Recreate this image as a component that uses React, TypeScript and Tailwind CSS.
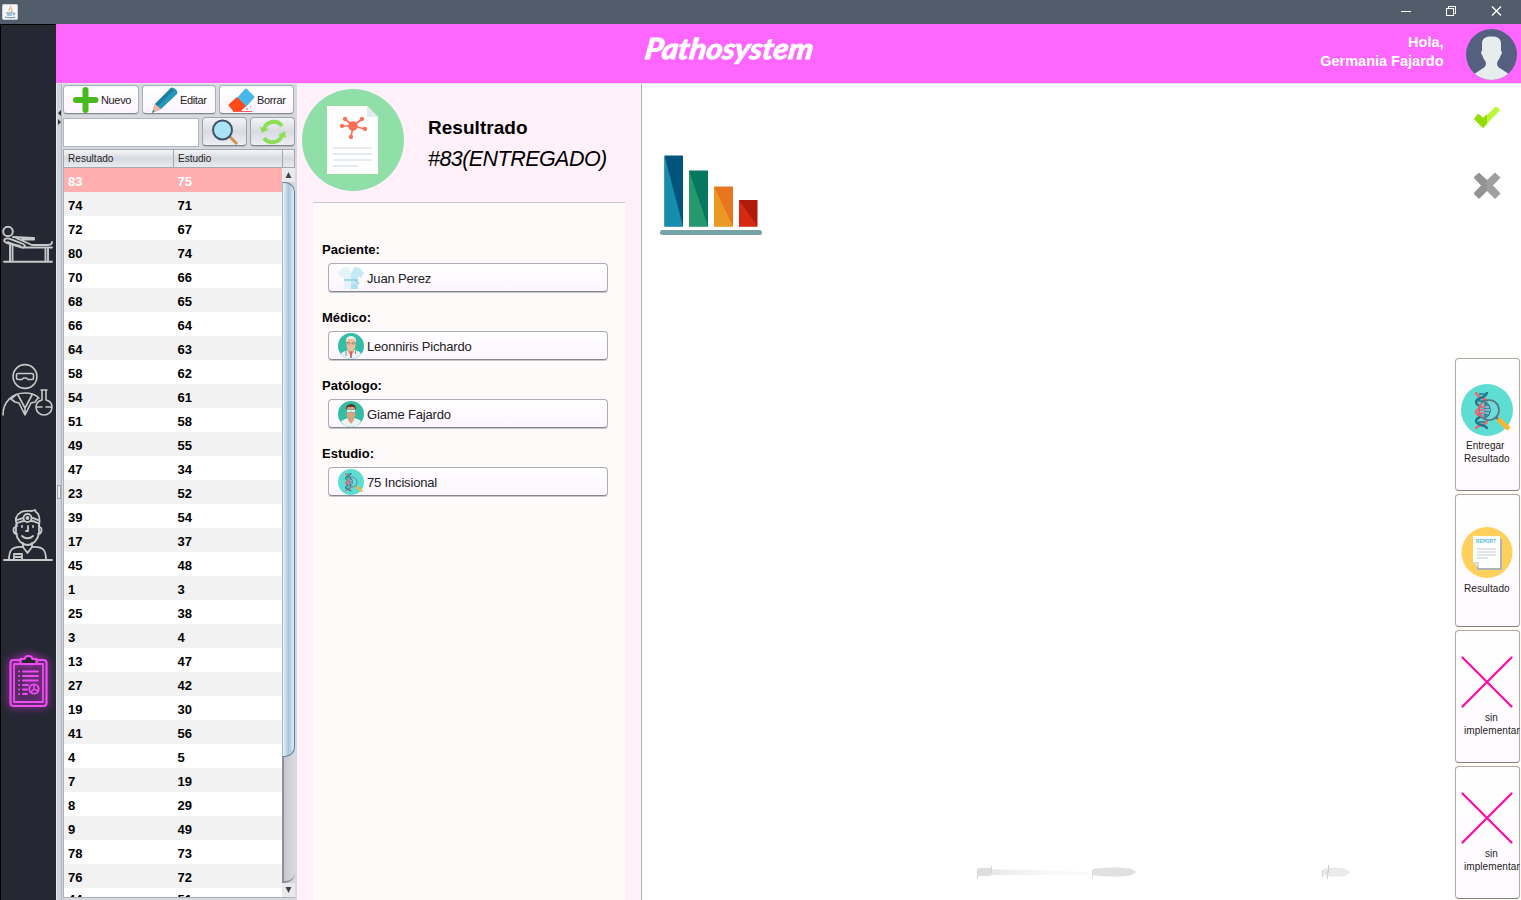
import React from "react";

const rows: [string, string][] = [
  ["83", "75"], ["74", "71"], ["72", "67"], ["80", "74"], ["70", "66"], ["68", "65"],
  ["66", "64"], ["64", "63"], ["58", "62"], ["54", "61"], ["51", "58"], ["49", "55"],
  ["47", "34"], ["23", "52"], ["39", "54"], ["17", "37"], ["45", "48"], ["1", "3"],
  ["25", "38"], ["3", "4"], ["13", "47"], ["27", "42"], ["19", "30"], ["41", "56"],
  ["4", "5"], ["7", "19"], ["8", "29"], ["9", "49"], ["78", "73"], ["76", "72"], ["44", "51"],
];

const lightButton =
  "flex items-center rounded-[4px] border border-[#a9adb5] border-b-[#85888f] bg-gradient-to-b from-white to-[#fdf5ff] shadow-[0_1px_0_#c4c6cc]";
const grayButton =
  "flex items-center justify-center rounded-[4px] border border-[#9fa3ab] border-b-[#85888f] bg-gradient-to-b from-[#f3f4f6] via-[#d9dbe2] to-[#eceef3] shadow-[0_1px_0_#b4b7be]";

function BedIcon() {
  return (
    <svg width="52" height="40" viewBox="0 0 52 40" fill="none" stroke="#c9c9c9" strokeWidth="1.9" strokeLinecap="round" strokeLinejoin="round">
      <circle cx="6" cy="6.500" r="4.800" />
      <path d="M3 14c2-1.500 5-.5 18 5 3 1.500 2 4-1 3.500L5 18c-3-1-3.500-2.500-2-4z" />
      <path d="M11 12 32 13v1.500H20M14 13l16 7h15q5 0 5-3M21 22.500h29" />
      <path d="M8 20v16M10.500 21v15M43.500 24v12M46 24v12M2 36.700h48" />
      <path d="M6 17c4 2 8 3 12 4" />
    </svg>
  );
}

function ScientistIcon() {
  return (
    <svg width="52" height="54" viewBox="0 0 52 54" fill="none" stroke="#c9c9c9" strokeWidth="1.600" strokeLinecap="round" strokeLinejoin="round">
      <circle cx="23" cy="13.500" r="11.900" />
      <path d="M16 10.500h14c1 0 1.500.5 1.500 1.500v3c0 1-.5 1.500-1.500 1.500h-4L24.500 15h-3L20 16.500h-4c-1 0-1.500-.5-1.500-1.500v-3c0-1 .5-1.500 1.500-1.500z" />
      <path d="M1 52c0-13 9-22 22-22 6 0 11 2 14 5M14 32l-5 4 4 3 4 1 6 12 6-12 4-1 3-4M16 32l7 13 7-13M23 45v7" />
      <path d="M39 27h6M40 27v10c-4 1-6 4-6 7 0 5 4 8 8 8s8-3 8-8c0-3-2-6-6-7V27M35 44h5M44 44h5" />
    </svg>
  );
}

function DoctorIcon() {
  return (
    <svg width="50" height="54" viewBox="0 0 50 54" fill="none" stroke="#c9c9c9" strokeWidth="1.800" strokeLinecap="round" strokeLinejoin="round">
      <path d="M14 18c-2-6-1-11 3-13 3-3 8-2 12-2l3-1 1 2c4 2 4 8 3 14M14 12c7-3 16-3 21 0M14 15c7-3 16-3 21 0" />
      <circle cx="24.500" cy="10" r="4" fill="#252833" />
      <circle cx="24.500" cy="10" r="1" />
      <path d="M13 17v8c1 7 6 12 11.500 12S35 32 36 25v-8M13 19c-4 0-3 7 1 7M36 19c4 0 3 7-1 7" />
      <path d="M25 18v5h-2M19 28c3 3 8 3 11 0M19 18v1M30 18v1M20 35v4l4.500 6 4.500-6v-4" />
      <path d="M6 52c0-9 2-14 14-13M43 52c0-9-2-14-14-13M1 52h48M11 52v-6h8v6M12 49h6" />
    </svg>
  );
}

function ClipboardIcon() {
  return (
    <svg width="54" height="70" viewBox="0 0 54 70" fill="none" stroke="#ee4df0" strokeLinecap="round" strokeLinejoin="round" className="drop-shadow-[0_0_4px_#d92fe0]">
      <rect x="9.500" y="14" width="36" height="46" rx="3" strokeWidth="2.200" />
      <path d="M18 18h-5v38h29V18h-6" strokeWidth="1.800" />
      <path d="M19.500 13h4c1-4 7-4 8 0h4v5h-16z" fill="#252833" strokeWidth="2.200" />
      <path d="M22 25.500h15M22 30h15M22 34.500h15M22 39h5M22 43.500h4M22 48h4M18 25.500h.1M18 30h.1M18 34.500h.1M18 39h.1M18 43.500h.1M18 48h.1" strokeWidth="1.900" />
      <circle cx="33" cy="43" r="4.700" strokeWidth="1.800" />
      <path d="M33 38.500V43l4 2M33 43l-3 3" strokeWidth="1.400" />
    </svg>
  );
}

function Dna({ size }: { size: number }) {
  return (
    <svg width={size} height={size} viewBox="0 0 52 52" className="shrink-0">
      <circle cx="26" cy="26" r="26" fill="#5eded3" />
      <g fill="none" strokeWidth="2.400">
        <path d="M15 8c0 7 11 5 11 10s-11 5-11 10 11 4 11 9-11 3-11 8" stroke="#ef6575" />
        <path d="M26 8c0 7-11 5-11 10s11 5 11 10-11 4-11 9 11 3 11 8" stroke="#25758c" />
        <path d="M18 10h6M17 17h8M18 26h6M17 30h8M17 38h7" stroke="#25758c" strokeWidth="1.500" />
      </g>
      <circle cx="28" cy="26" r="10" fill="#79d7df" fillOpacity=".65" stroke="#53747c" strokeWidth="1.600" />
      <path d="M24 18c7 2 7 14 0 16z" fill="#25758c" fillOpacity=".7" stroke="#25758c" />
      <path d="M22 19c-6 2-6 12 0 14M19 23h5M19 26h5M19 29h5" fill="none" stroke="#ef6575" strokeWidth="1.600" />
      <path d="M24 23h4M24 26h5M24 29h4" stroke="#c9eef0" />
      <path d="m35 33 3 3" stroke="#53747c" strokeWidth="2" />
      <path d="m37 35 11 10" stroke="#ffb22e" strokeWidth="4.500" />
    </svg>
  );
}

function Gown() {
  return (
    <svg width="26" height="26" viewBox="0 0 26 26" className="shrink-0">
      <path d="M9 2 4 3 0 8l3 5 3-2v13h7V8z" fill="#e4f3fa" />
      <path d="m17 2 5 1 4 5-3 5-3-2v13h-7V8z" fill="#c4e9f3" />
      <path d="M9 2h8l-4 6z" fill="#f5fbfe" />
      <path d="M6 15h14M17 15l4 4" stroke="#8bd2e4" strokeWidth="1.300" />
      <path d="M13 19h6v5h-6z" fill="#aae0ef" />
    </svg>
  );
}

function Person({ young = false }: { young?: boolean }) {
  return (
    <svg width="26" height="26" viewBox="0 0 26 26" className="shrink-0">
      <circle cx="13" cy="13" r="13" fill="#35bca5" />
      <path d="M3 21c2-3 5-3 7-4h6c3 1 6 1 7 4-5 6.500-15 6.500-20 0z" fill="#eaf5f8" />
      <path d="M10 15h6v4l-3 4-3-4z" fill="#d9a17c" />
      <path d="M8.500 8c0-6 9-6 9 0v4c0 8-9 8-9 0z" fill={young ? "#dca47f" : "#edc09d"} />
      <path d="M8 9c-1-8 11-8 10 0l-2-3h-6z" fill={young ? "#593a2e" : "#eee"} />
      {young ? (
        <path d="M8.500 8.500h9v3.200h-3l-1.500-1-1.500 1h-3z" fill="#d8f4ed" stroke="#4b7772" strokeWidth=".5" />
      ) : (
        <>
          <path d="M9.500 9.500h2.500v1.500H9.500zm4.500 0h2.500v1.500H14z" fill="none" stroke="#8a6250" strokeWidth=".5" />
          <path d="M13 18.500v6.500" stroke="#d75155" strokeWidth="1.600" />
          <path d="M8 18v5M17.500 18v3" stroke="#536b7c" strokeWidth=".8" />
        </>
      )}
    </svg>
  );
}

function Sidebar() {
  return (
    <nav className="flex w-14 shrink-0 flex-col border-l border-t border-black bg-[#252833]">
      <div className="ml-px mt-[200px] h-[40px]"><BedIcon /></div>
      <div className="ml-px mt-[98px] h-[54px]"><ScientistIcon /></div>
      <div className="ml-[2px] mt-[91px] h-[54px]"><DoctorIcon /></div>
      <div className="mt-[84px] h-[70px]"><ClipboardIcon /></div>
    </nav>
  );
}

function Header() {
  return (
    <header className="flex h-[59px] shrink-0 bg-[#ff66ff] text-white">
      <div className="w-[585px] shrink-0" />
      <svg width="176" height="50" viewBox="0 0 176 50" className="shrink-0">
        <g transform="translate(0 35) skewX(-8)">
          <text x="3" y="0" fill="white" stroke="white" strokeWidth=".9" textLength="168" lengthAdjust="spacingAndGlyphs" fontSize="29" fontStyle="italic" fontWeight="700" fontFamily="Magneto, 'Brush Script MT', Lato, sans-serif">Pathosystem</text>
        </g>
      </svg>
      <div className="flex-1 pt-[9px] text-right text-[14.500px] font-bold leading-[19px] pr-[21.500px]">
        Hola,<br />Germania Fajardo
      </div>
      <svg width="56" height="59" viewBox="0 0 56 59" className="shrink-0">
        <clipPath id="avatar"><circle cx="26.500" cy="30.500" r="25.500" /></clipPath>
        <circle cx="26.500" cy="30.500" r="25.500" fill="#556080" />
        <path clipPath="url(#avatar)" d="M17 20c0-6 4-7.500 9.500-7.500S36 14 36 20v7c1.500 0 1 3.500-.5 4.500-.5 3-2 4.500-3 6-1 3 0 5.500 3 7l9 6v7H8.500v-7l9-6c3-1.500 4-4 3-7-1-1.500-2.500-3-3-6-1.500-1-2-4.500-.5-4.500z" fill="#e7eced" />
      </svg>
    </header>
  );
}

function Results() {
  return (
    <section className="flex w-[241px] shrink-0 bg-[#d6d9df]">
      <div className="flex w-[6px] shrink-0 flex-col border-l border-r border-[#e6e8ed] border-r-[#aeb2bb] bg-[#d0d3db]">
        <svg width="5" height="15" viewBox="0 0 5 15" className="mt-[26px] shrink-0"><path d="M4 0v6L1 3zM1 9v6l3-3z" fill="#343434" /></svg>
        <div className="mt-[360px] h-[14px] w-[4px] border border-[#9da1aa] bg-[#eceef2]" />
      </div>
      <div className="flex min-w-0 flex-1 flex-col pl-[1px] pr-[2px] pt-[1px]">
        <div className="flex h-[30px] gap-[3px] text-[11px] tracking-[-0.35px] text-[#222]">
          <button className={`${lightButton} h-[29px] w-[76px] pl-[8px]`}>
            <svg width="28" height="28" viewBox="0 0 28 28" className="shrink-0"><path d="M13.500 4v20M4 14h19.500" stroke="#48b91e" strokeWidth="6" strokeLinecap="round" /></svg>
            <span className="ml-[1px] pt-[2px]">Nuevo</span>
          </button>
          <button className={`${lightButton} h-[29px] w-[74px] pl-[8px]`}>
            <svg width="28" height="28" viewBox="0 0 28 28" className="shrink-0">
              <path d="M1 27 4 18 20 2c2-2 8 3 6 6L10 23z" fill="#2696ba" /><path d="M4 18 20 2l3 2L7 20z" fill="#1b7e9f" /><path d="m1 27 3-9 6 5z" fill="#f2b5a1" /><path d="m1 27 1-3 2 1z" fill="#258baa" />
            </svg>
            <span className="ml-[1px] pt-[2px]">Editar</span>
          </button>
          <button className={`${lightButton} h-[29px] w-[75px] pl-[8px]`}>
            <svg width="28" height="28" viewBox="0 0 28 28" className="shrink-0">
              <path d="m9 12 8-9q1-1 2 0l7 7q1 1 0 2l-8 9z" fill="#4bb7e8" /><path d="m9 11 9 9-5 5H5l-4-5q-1-1 0-2z" fill="#ff4b19" /><path d="M5 25.500h19M18 23h2m2-2h1" stroke="#ff5365" />
            </svg>
            <span className="ml-[1px] pt-[2px]">Borrar</span>
          </button>
        </div>
        <div className="mt-[2px] flex h-[32px] gap-[3px]">
          <input aria-label="Buscar" className="mt-px h-[29px] w-[136px] border border-[#b2b5bc] bg-white" />
          <button aria-label="Buscar" className={`${grayButton} h-[29px] w-[45px]`}>
            <svg width="28" height="28" viewBox="0 0 28 28"><path d="m18 18 8 8" stroke="#cf9351" strokeWidth="3" /><circle cx="11.500" cy="12" r="9.500" fill="#ace4f7" stroke="#3e5365" strokeWidth="2" /></svg>
          </button>
          <button aria-label="Actualizar" className={`${grayButton} h-[29px] w-[45px]`}>
            <svg width="28" height="28" viewBox="0 0 28 28" fill="none"><path d="M4 11A10 9.500 0 0 1 22 8M22 17A10 9.500 0 0 1 4 20" stroke="#8dde58" strokeWidth="4" transform="translate(1 0)" /><path d="m1 9 2 6 7-4zM27 20l-1-7-7 4z" fill="#8dde58" /></svg>
          </button>
        </div>
        <div className="flex h-[19px] shrink-0 border border-[#a5a8b0] bg-gradient-to-b from-[#f5f5f7] via-[#d8dae1] to-[#e9ebef] text-[10px] leading-[18px] text-[#222]">
          <div className="w-[110px] border-r border-[#a5a8b0] pl-[4px] tracking-[0.05px]">Resultado</div>
          <div className="w-[109px] border-r border-[#a5a8b0] pl-[4px]">Estudio</div>
        </div>
        <div className="flex h-[730px] shrink-0 overflow-hidden border-b border-l border-[#adb0b7]">
          <div className="w-[218px] bg-white">
            {rows.map(([result, study], i) => (
              <div key={`${result}-${study}`} className={`flex h-6 text-[13px] font-bold ${i === rows.length - 1 ? "leading-[24px]" : "leading-[27px]"} ${i === 0 ? "bg-[#ffafaf] text-white" : i % 2 ? "bg-[#f2f2f2] text-black" : "bg-white text-black"}`}>
                <span className="w-[109.500px] pl-[4px]">{result}</span><span className="pl-[4px]">{study}</span>
              </div>
            ))}
          </div>
          <div className="flex flex-1 flex-col items-center bg-gradient-to-r from-[#c1c4cc] to-[#d9dbe1]">
            <div className="flex h-[14px] w-full shrink-0 items-center justify-center bg-[#e8eaee]"><svg width="7" height="6" viewBox="0 0 7 6"><path d="m3.500 0 3 6h-6z" fill="#444" /></svg></div>
            <div className="h-[575px] w-full shrink-0 rounded-r-[10px] border border-[#627c92] border-l-[#a5b8c8] bg-gradient-to-r from-[#edf4fa] via-[#adc3d8] to-[#d8f1fc]" />
            <div className="w-full flex-1 rounded-br-[10px] border-b-2 border-l-2 border-[#8d9099]" />
            <div className="flex h-[14px] w-full shrink-0 items-center justify-center bg-[#e8eaee]"><svg width="7" height="6" viewBox="0 0 7 6"><path d="M.5 0h6l-3 6z" fill="#444" /></svg></div>
          </div>
        </div>
      </div>
    </section>
  );
}

function Field({ label, value, icon }: { label: string; value: string; icon: React.ReactNode }) {
  return (
    <div className="h-[68px]">
      <div className="pl-[9px] pt-[2px] text-[13px] font-bold leading-[18px]">{label}</div>
      <button className={`${lightButton} ml-[15px] mt-[4px] h-[29px] w-[280px] pl-[9px] text-[13px] tracking-[-0.17px] text-[#222]`}>
        {icon}<span className="ml-[3px] pt-[2px]">{value}</span>
      </button>
    </div>
  );
}

function Details() {
  return (
    <section className="flex w-[345px] shrink-0 flex-col border-r border-[#aeb3b8] bg-[#fff0fa]">
      <div className="flex h-[118px]">
        <svg width="112" height="112" viewBox="0 0 112 112" className="shrink-0">
          <circle cx="56" cy="56" r="51" fill="#90dfa9" />
          <path d="M30 22h40l11 11v57H30z" fill="#fff" /><path d="M70 22v11h11z" fill="#e3e9ed" />
          <g stroke="#ff7058" strokeWidth="1.700" fill="#ff7058">
            <path d="m56 42-8-7m8 7 9-7m-9 7 12 3m-12-3-11 0m11 0-2 11" />
            <circle cx="56" cy="42" r="4" /><circle cx="48" cy="35" r="1.300" /><circle cx="65" cy="35" r="1.300" /><circle cx="68" cy="45" r="1.300" /><circle cx="45" cy="42" r="1.300" /><circle cx="54" cy="53" r="1.300" />
          </g>
          <path d="M36 64h39M36 70h39M36 76h39M36 82h25" stroke="#e6ebef" strokeWidth="2" />
        </svg>
        <div className="pl-[19px] pt-[31px]">
          <h1 className="text-[19px] font-bold leading-[26px] tracking-[0.03px]">Resultrado</h1>
          <p className="mt-[4px] text-[21.500px] italic leading-[28px] tracking-[-0.55px]">#83(ENTREGADO)</p>
        </div>
      </div>
      <div className="ml-4 w-[312px] flex-1 border-t border-[#c9c9cd] bg-[#fffafa] pt-[36px]">
        <Field label="Paciente:" value="Juan Perez" icon={<Gown />} />
        <Field label="Médico:" value="Leonniris Pichardo" icon={<Person />} />
        <Field label="Patólogo:" value="Giame Fajardo" icon={<Person young />} />
        <Field label="Estudio:" value="75 Incisional" icon={<Dna size={26} />} />
      </div>
    </section>
  );
}

function ActionButton({ icon, first, second }: { icon: React.ReactNode; first?: string; second: string }) {
  return (
    <button className="flex h-[133px] w-[65px] shrink-0 flex-col items-center justify-center rounded-[4px] border border-[#aaacaf] border-b-[#7e8186] bg-gradient-to-b from-white to-[#fffaff] text-[10px] leading-[13px] text-[#222] shadow-[0_0_0_1px_#fffbe8]">
      <span className="-ml-[2px] block">{icon}</span>
      <span className="mt-[3px] flex w-full flex-col whitespace-nowrap pl-[8px] text-left">
        {first && <span className={first === "sin" ? "pl-[21px]" : "pl-[2px]"}>{first}</span>}
        <span className="tracking-[0.07px]">{second}</span>
      </span>
    </button>
  );
}

function Report() {
  return (
    <svg width="52" height="52" viewBox="0 0 52 52">
      <circle cx="26" cy="25.500" r="25.500" fill="#ffd05b" /><path d="M14 12h27v31H16z" fill="#acb4b8" /><path d="M12 9h27v32H18l-6-6z" fill="#fff" /><path d="M12 35h6v6z" fill="#d6dce0" />
      <text x="15" y="16" textLength="20" lengthAdjust="spacingAndGlyphs" fontSize="5" fontWeight="bold" fill="#54b9d5">REPORT</text>
      <path d="M16 22h19M16 25h19M16 28h19M16 31h11" stroke="#d5dbe1" strokeWidth="1.300" />
    </svg>
  );
}

function Cross() {
  return <svg width="52" height="52" viewBox="0 0 52 52"><path d="m1.500 1.500 49 49m0-49-49 49" stroke="#ff08a8" strokeWidth="2.200" strokeLinecap="round" /></svg>;
}

function Workspace() {
  return (
    <main className="flex min-w-0 flex-1">
      <div className="flex min-w-0 flex-1 flex-col justify-between">
        <svg width="104" height="84" viewBox="0 0 104 84" className="ml-[17px] mt-[71px]">
          <path d="M5.500.5H24v71H5.500z" fill="#02547d" /><path d="m5.500.5 18.500 71H5.500z" fill="#168caf" />
          <path d="M30 15.500h19v56H30z" fill="#047860" /><path d="m30 15.500 19 56H30z" fill="#26986d" />
          <path d="M55 31.500h19v40H55z" fill="#e77522" /><path d="m55 31.500 19 40H55z" fill="#ea9922" />
          <path d="M80 45h18.500v26.500H80z" fill="#af1a0b" /><path d="m80 45 18.500 26.500H80z" fill="#d6290f" />
          <path d="M3.500 77.500h97" stroke="#74a2a6" strokeWidth="5" strokeLinecap="round" />
        </svg>
        <svg width="380" height="18" viewBox="0 0 380 18" className="mb-[19px] ml-[333px]">
          <defs><linearGradient id="shade"><stop stopColor="#dfdfdf" /><stop offset=".28" stopColor="#eee" /><stop offset=".7" stopColor="#fafafa" /></linearGradient></defs>
          <path d="M2 6 60 7 115 9v3H2z" fill="url(#shade)" /><path d="M2 6 5 5h11v8H2z" fill="#dedede" />
          <path d="M118 6c12-2 30-2 39 0l4 3-4 3c-10 2-26 2-39 0z" fill="#e1e1e1" />
          <path d="M2.500 8v8M16.500 3v8M117.500 7v8" stroke="#d7d7d7" />
          <path d="M348 6c8-2 20-2 24 1l3 2-3 3c-6 2-16 2-24 0z" fill="#eaeaea" /><path d="M347.500 7v7M353.500 2v8M352.500 8v8" stroke="#cfcfcf" />
        </svg>
      </div>
      <aside className="flex w-[66px] shrink-0 flex-col">
        <svg width="28" height="26" viewBox="0 0 28 26" className="ml-[19px] mt-[22px] shrink-0">
          <path d="m0 13 4-5 5 5L21 1q2-1 5 3L9 22z" fill="#bbfa3b" /><path d="m0 13 4-5q2 0 5 4l4-4v10l-4 4z" fill="#94dc08" />
        </svg>
        <svg width="28" height="28" viewBox="0 0 28 28" className="ml-[19px] mt-[40px] shrink-0">
          <path d="m5 1 8 7.500L21 1l5 4.500-7.500 8 7.500 8-5 5-8-8-8 8-5-5 7.500-8L0 5.500z" fill="#9f9f9f" stroke="#9f9f9f" strokeLinejoin="round" /><path d="m5 1 8 7.500v10l-8 8-5-5 7.500-8L0 5.500z" fill="#939393" />
        </svg>
        <div className="mt-[158px] flex flex-col gap-[3px]">
          <ActionButton icon={<Dna size={52} />} first="Entregar" second="Resultado" />
          <ActionButton icon={<Report />} second="Resultado" />
          <ActionButton icon={<Cross />} first="sin" second="implementar" />
          <ActionButton icon={<Cross />} first="sin" second="implementar" />
        </div>
      </aside>
    </main>
  );
}

export default function App() {
  return (
    <div className="flex h-[900px] w-[1521px] flex-col overflow-hidden bg-white font-['Liberation_Sans',sans-serif] text-black">
      <div className="flex h-6 shrink-0 items-center justify-between bg-[#515d6b] pl-[2px]">
        <svg width="16" height="16" viewBox="0 0 16 16"><rect x=".5" y=".5" width="15" height="15" rx="1" fill="#f4f6f7" stroke="#cbd0d5" /><path d="M8 7c-3-2 3-3 0-5m1 6c3-2-1-3 1-4" stroke="#e99848" fill="none" /><path d="M4 9h7m-6 2h5m-7 2c3 1 7 1 10 0m-2-4c3 0 2 2 0 2" stroke="#5789ab" fill="none" /></svg>
        <svg width="121" height="24" viewBox="0 0 121 24" fill="none" stroke="white" shapeRendering="crispEdges"><path d="M1 11.500h10" /><path d="M46.500 8.500h7v7h-7zM48.500 8.500v-2h7v7h-2" /><path d="m92 6.500 9 9m0-9-9 9" strokeWidth="1.300" shapeRendering="auto" /></svg>
      </div>
      <div className="flex min-h-0 flex-1">
        <Sidebar />
        <div className="flex min-w-0 flex-1 flex-col">
          <Header />
          <div className="flex min-h-0 flex-1 border-t border-[#e5e2e8]"><Results /><Details /><Workspace /></div>
        </div>
      </div>
    </div>
  );
}
